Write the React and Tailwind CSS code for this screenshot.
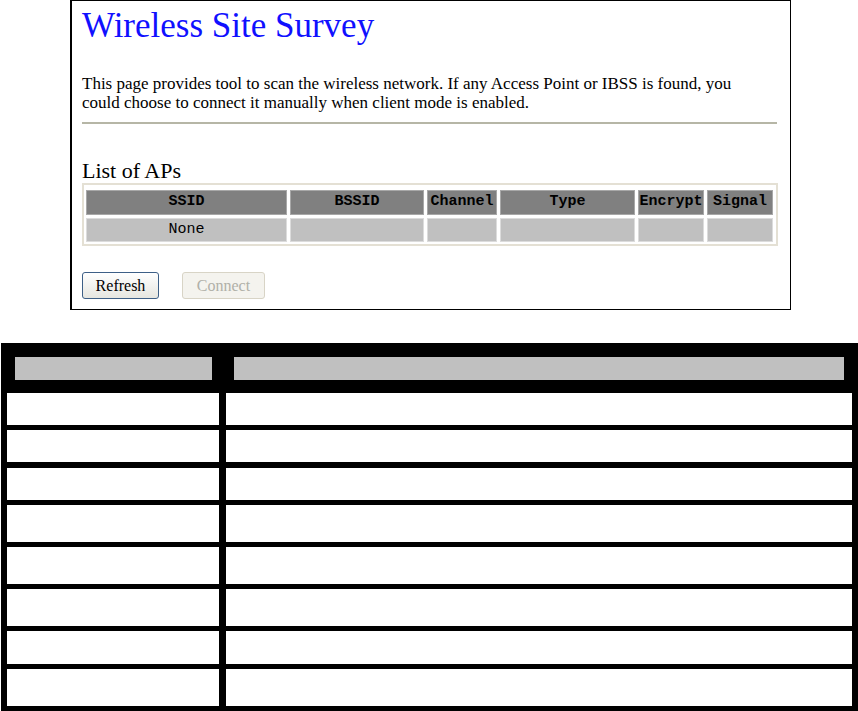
import React from "react";

const serif = { fontFamily: '"Liberation Serif", "Times New Roman", serif' };
const mono = { fontFamily: '"Liberation Mono", "Courier New", monospace' };

const columns = ["SSID", "BSSID", "Channel", "Type", "Encrypt", "Signal"];

const rowHeights = ["h-[32px]", "h-[32px]", "h-[32px]", "h-[37px]", "h-[37px]", "h-[37px]", "h-[33px]", "h-[37px]"];
const gapTops = ["mt-0", "mt-[5px]", "mt-[6px]", "mt-[5px]", "mt-[5px]", "mt-[5px]", "mt-[5px]", "mt-[5px]"];

const SurveyPanel = () => {
  return (
    <div className="ml-[70px] w-[721px] h-[310px] border border-black border-l-2 pl-[10px] pr-[13px]" style={serif}>
      <h1 className="text-[35px] leading-none text-[#1010ff] pt-[7px]">Wireless Site Survey</h1>
      <p className="w-[685px] text-[17px] leading-[19px] text-black mt-[31px]">
        This page provides tool to scan the wireless network. If any Access Point or IBSS is found, you
        could choose to connect it manually when client mode is enabled.
      </p>
      <div className="h-[2px] bg-[#b6b6a6] mt-[10px]" />

      <h2 className="text-[22px] leading-none text-black mt-[36px]">List of APs</h2>
      <div className="mt-[1px] w-[696px] border-2 border-[#e4e0d4] pt-[5px] px-[2px] pb-[2px]">
        <div className="grid grid-cols-[201px_134px_70px_135px_66px_66px] gap-x-[3px] gap-y-[3px]" style={mono}>
          {columns.map((c) => (
            <div
              key={c}
              className="h-[25px] bg-[#808080] border border-[#a8a8a8] flex items-center justify-center text-[15px] font-bold text-black"
            >
              {c}
            </div>
          ))}
          {columns.map((c, i) => (
            <div
              key={c + "-row"}
              className="h-[24px] bg-[#c0c0c0] border border-[#dcdcdc] flex items-center justify-center text-[15px] text-black"
            >
              {i === 0 ? "None" : ""}
            </div>
          ))}
        </div>
      </div>

      <div className="flex gap-[23px] mt-[26px]">
        <button className="w-[77px] h-[27px] rounded-[3px] border border-[#3d5f86] bg-gradient-to-b from-white to-[#e6e6e0] text-[16px] text-black leading-none">
          Refresh
        </button>
        <button
          disabled
          className="w-[83px] h-[27px] rounded-[3px] border border-[#d8d4c6] bg-[#f4f3ee] text-[16px] text-[#b0b0a8] leading-none"
        >
          Connect
        </button>
      </div>
    </div>
  );
};

const BlankTable = () => {
  return (
    <div className="mt-[33px] ml-[1px] w-[857px] h-[368px] bg-black">
      <div className="flex pt-[14px] pb-[13px] pl-[14px]">
        <div className="w-[197px] h-[23px] bg-[#c0c0c0]" />
        <div className="w-[610px] h-[23px] bg-[#c0c0c0] ml-[22px]" />
      </div>
      <div className="flex flex-col pl-[6px] pr-[6px]">
        {rowHeights.map((h, i) => (
          <div key={i} className={`flex ${gapTops[i]}`}>
            <div className={`w-[212px] ${h} bg-white`} />
            <div className={`flex-1 ${h} bg-white ml-[7px]`} />
          </div>
        ))}
      </div>
    </div>
  );
};

export default function App() {
  return (
    <div className="w-[858px] h-[711px] bg-white overflow-hidden">
      <SurveyPanel />
      <BlankTable />
    </div>
  );
}
